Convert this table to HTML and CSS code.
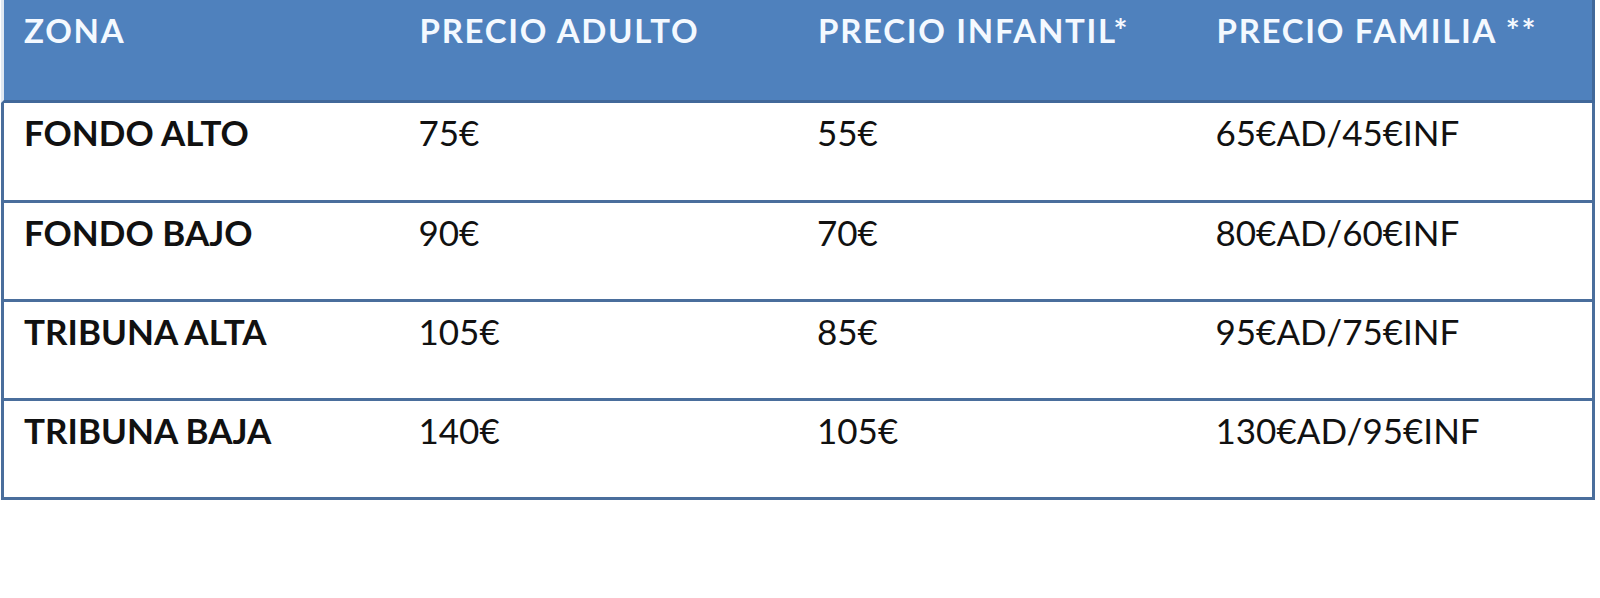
FILE: index.html
```html
<!DOCTYPE html>
<html lang="es">
<head>
<meta charset="utf-8">
<title>Precios</title>
<link rel="stylesheet" href="styles.css">
</head>
<body>
<table class="prices">
  <thead>
    <tr>
      <th>ZONA</th>
      <th>PRECIO ADULTO</th>
      <th>PRECIO INFANTIL*</th>
      <th>PRECIO FAMILIA **</th>
    </tr>
  </thead>
  <tbody>
    <tr><td class="zone">FONDO ALTO</td><td>75€</td><td>55€</td><td>65€AD/45€INF</td></tr>
    <tr><td class="zone">FONDO BAJO</td><td>90€</td><td>70€</td><td>80€AD/60€INF</td></tr>
    <tr><td class="zone">TRIBUNA ALTA</td><td>105€</td><td>85€</td><td>95€AD/75€INF</td></tr>
    <tr><td class="zone">TRIBUNA BAJA</td><td>140€</td><td>105€</td><td>130€AD/95€INF</td></tr>
  </tbody>
</table>
</body>
</html>
```
FILE: styles.css
```css
html, body {
  margin: 0;
  padding: 0;
  background: #ffffff;
}

.prices {
  margin-left: 1px;
  width: 1594px;
  table-layout: fixed;
  border-collapse: separate;
  border-spacing: 0;
  font-family: Lato, "Open Sans", "Liberation Sans", sans-serif;
}

.prices th {
  background: #4f81bd;
  color: #f4f9ff;
  font-size: 33px;
  font-weight: 700;
  letter-spacing: 1.7px;
  line-height: 1.2;
  text-align: left;
  vertical-align: top;
  padding: 11px 0 49px 20px;
  border-bottom: 3px solid #41689a;
  white-space: nowrap;
}

.prices th:first-child {
  border-left: 3px solid #dfe8f2;
}

.prices th:last-child {
  border-right: 3px solid #41689a;
}

.prices td {
  color: #111111;
  font-size: 35px;
  font-weight: 400;
  line-height: 1.2;
  vertical-align: top;
  padding: 8px 0 46px 19px;
  border-bottom: 3px solid #4a6e9c;
  white-space: nowrap;
}

.prices tbody tr:first-child td {
  padding-bottom: 47px;
}

.prices td:first-child {
  border-left: 3px solid #4a6e9c;
  padding-left: 20px;
}

.prices td:last-child {
  border-right: 3px solid #4a6e9c;
}

.prices td.zone {
  font-weight: 700;
}
```
